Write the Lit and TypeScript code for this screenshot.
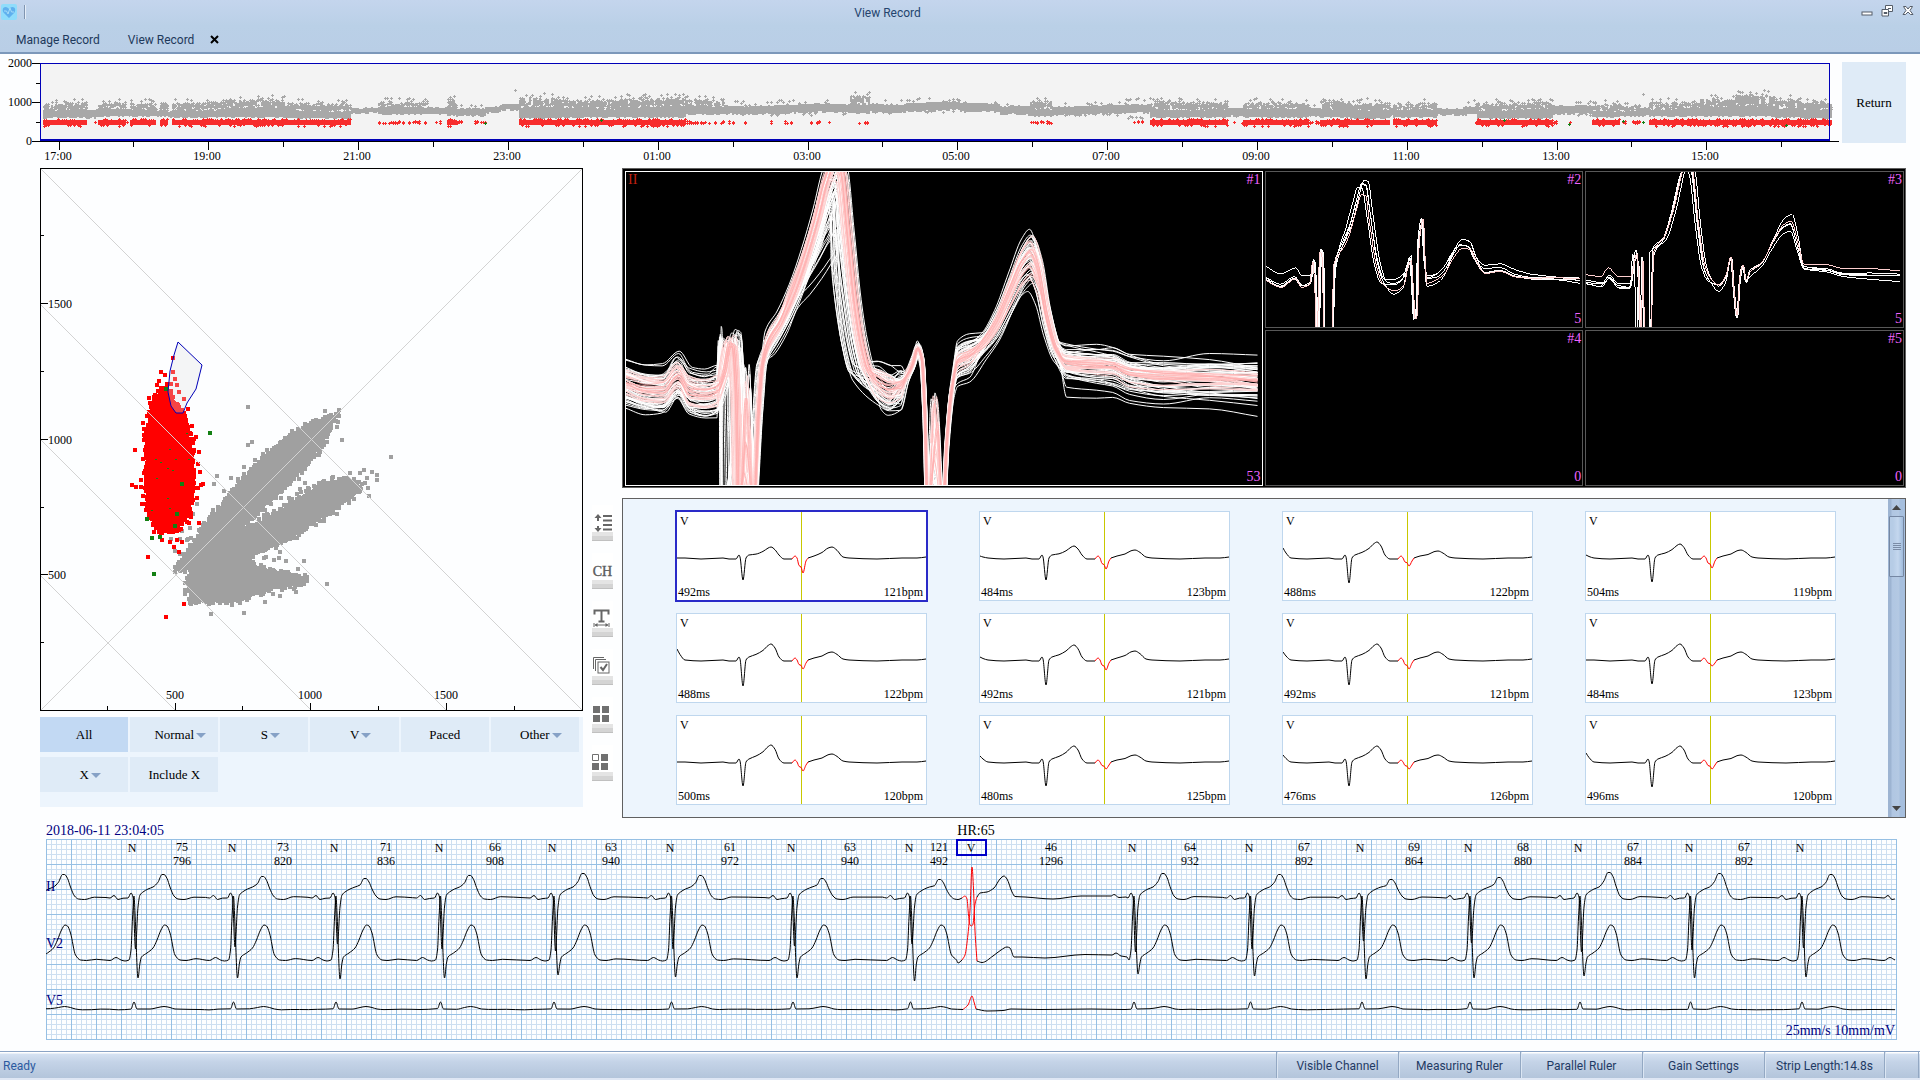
import { LitElement, html, svg, css, nothing } from "lit";
import { customElement, property } from "lit/decorators.js";
import { classMap } from "lit/directives/class-map.js";

type Pt = [number, number];

/* ---------- shared helpers ---------- */

/** Small seeded generator, so every render draws the same data. */
function rng(seed: number): () => number {
  let s = seed >>> 0;
  return () => {
    s = (s + 0x6d2b79f5) >>> 0;
    let t = s;
    t = Math.imul(t ^ (t >>> 15), t | 1);
    t ^= t + Math.imul(t ^ (t >>> 7), t | 61);
    return ((t ^ (t >>> 14)) >>> 0) / 4294967296;
  };
}

const f = (n: number) => n.toFixed(1);

/** Monotone cubic path through points whose x only increases. */
function curve(p: Pt[]): string {
  const n = p.length;
  const d: number[] = [];
  for (let i = 0; i < n - 1; i++) d.push((p[i + 1][1] - p[i][1]) / (p[i + 1][0] - p[i][0] || 0.01));
  const m: number[] = [d[0]];
  for (let i = 1; i < n - 1; i++) {
    const a = d[i - 1];
    const b = d[i];
    m.push(a * b <= 0 ? 0 : (2 * a * b) / (a + b));
  }
  m.push(d[n - 2]);
  let out = `M${f(p[0][0])} ${f(p[0][1])}`;
  for (let i = 0; i < n - 1; i++) {
    const h = (p[i + 1][0] - p[i][0]) / 3;
    out += `C${f(p[i][0] + h)} ${f(p[i][1] + m[i] * h)} ${f(p[i + 1][0] - h)} ${f(p[i + 1][1] - m[i + 1] * h)} ${f(p[i + 1][0])} ${f(p[i + 1][1])}`;
  }
  return out;
}

function inside(x: number, y: number, poly: Pt[]): boolean {
  let hit = false;
  for (let i = 0, j = poly.length - 1; i < poly.length; j = i++) {
    const [xi, yi] = poly[i];
    const [xj, yj] = poly[j];
    if (yi > y !== yj > y && x < ((xj - xi) * (y - yi)) / (yj - yi) + xi) hit = !hit;
  }
  return hit;
}

const polyPath = (p: Pt[]) => "M" + p.map(([x, y]) => `${x} ${y}`).join("L") + "Z";

/* ---------- trend overview ---------- */

/** from, to, upper edge, lower edge, upper scatter density, ectopic density */
const TREND: [number, number, number, number, number, number][] = [
  [43, 47, 102, 120, 1, 1.4], [47, 86, 101, 118, 0.9, 1], [86, 98, 109, 119, 0.1, 0.15], [98, 126, 101, 117, 0.8, 0.9],
  [126, 130, 108, 117, 0.4, 0.3], [130, 155, 102, 117, 0.9, 1], [155, 160, 109, 116, 0.2, 0], [160, 168, 102, 117, 0.8, 0.9],
  [168, 172, 109, 117, 0.3, 0], [172, 225, 101, 118, 0.8, 1], [225, 285, 98, 118, 1, 1.2], [285, 351, 102, 119, 0.8, 1.1],
  [351, 378, 107, 113, 0, 0], [378, 427, 100, 115, 0.6, 0.5], [427, 447, 106, 114, 0.1, 0.05], [447, 456, 98, 116, 1, 1],
  [456, 485, 106, 115, 0.15, 0.15], [485, 500, 105, 112, 0, 0], [500, 519, 103, 110, 0, 0.02], [519, 560, 96, 119, 0.8, 1],
  [560, 620, 98, 118, 0.8, 1.1], [620, 686, 96, 118, 0.9, 1.1], [686, 724, 98, 115, 0.8, 0.4], [724, 760, 102, 116, 0.2, 0.1],
  [760, 830, 101, 115, 0.3, 0.15], [830, 850, 102, 115, 0.2, 0.02], [850, 870, 94, 114, 0.7, 0.25], [870, 906, 101, 113, 0.2, 0],
  [906, 960, 99, 112, 0.4, 0], [960, 1000, 102, 113, 0.1, 0], [1000, 1008, 104, 117, 0.4, 0.25], [1008, 1030, 103, 115, 0.1, 0],
  [1030, 1052, 99, 117, 0.5, 0.4], [1052, 1125, 103, 116, 0.3, 0], [1125, 1150, 99, 118, 0.4, 0.25], [1150, 1227, 100, 118, 0.8, 1],
  [1227, 1243, 107, 116, 0.2, 0.2], [1243, 1309, 101, 118, 0.8, 1], [1309, 1320, 106, 116, 0.3, 0.15], [1320, 1350, 99, 118, 0.8, 1],
  [1350, 1389, 101, 119, 0.8, 1], [1389, 1393, 107, 116, 0.2, 0], [1393, 1436, 102, 118, 0.7, 1], [1436, 1463, 107, 115, 0, 0.04],
  [1463, 1477, 101, 117, 0.3, 0.25], [1477, 1553, 101, 119, 0.8, 1], [1553, 1575, 105, 115, 0.1, 0.25], [1575, 1592, 102, 116, 0.3, 0.1],
  [1592, 1620, 102, 118, 0.6, 0.8], [1620, 1640, 104, 117, 0.5, 0.35], [1640, 1649, 105, 115, 0.1, 0.05], [1649, 1700, 101, 117, 0.8, 1.2],
  [1700, 1735, 97, 117, 1, 1.3], [1735, 1775, 93, 117, 1, 1.2], [1775, 1800, 97, 118, 0.9, 1.1], [1800, 1831, 100, 119, 0.8, 1.3],
];

const plus = (x: number, y: number) => `M${x} ${y}h1v-1h1v1h1v1h-1v1h-1v-1h-1z`;
const column = (x: number, y0: number, y1: number) => `M${x} ${Math.round(y0)}h2V${Math.round(y1)}h-2z`;

@customElement("trend-plot")
export class TrendPlot extends LitElement {
  static styles = css`
    :host { display: block; }
    svg { display: block; width: 100%; height: auto; }
    text { font: 12px "Liberation Serif", "Times New Roman", serif; fill: #000; }
    .axis { fill: none; stroke: #000; shape-rendering: crispEdges; }
    .area { fill: #f3f3f3; }
    .frame { fill: none; stroke: #0000b8; shape-rendering: crispEdges; }
    .sinus { fill: #a8a8a8; shape-rendering: crispEdges; }
    .ectopic { fill: #f72c2c; shape-rendering: crispEdges; }
    .other { fill: #138013; shape-rendering: crispEdges; }
  `;

  render() {
    const r = rng(7);
    let grey = "";
    let red = "";
    for (const [x0, x1, top, bottom, scatter, ectopic] of TREND) {
      const thin = scatter <= 0.45;
      for (let x = x0; x < x1; x += 2) {
        const mid = (top + bottom) / 2 + Math.sin(x / 23);
        if (thin) {
          const half = Math.min(4, (bottom - top) / 2.5);
          grey += column(x, mid - half + r(), mid + half + r() * 2);
          if (r() < scatter) grey += plus(x, Math.round(top + (r() - 0.3) * 5));
          if (r() < scatter) grey += plus(x, Math.round(bottom - r() * 2));
        } else {
          grey += column(x, mid - 1 + r() * 2, bottom - 1 + r());
          if (r() < 0.85) grey += column(x, top + 2 + r() * 3, mid - r() * 2);
          for (let k = 0; k < 6; k++) {
            if (r() < scatter) grey += plus(x, Math.round(top + 1 + r() * (bottom - top - 4)));
          }
          if (r() < 0.3 * scatter) grey += plus(x, Math.round(top - r() * 3));
        }
        if (ectopic >= 0.8) {
          red += column(x, 120.5 - r(), 124.5 + r() * ectopic);
          if (r() < 0.5 * ectopic) red += plus(x, Math.round(119 + r()));
          if (r() < 0.35 * ectopic) red += plus(x, Math.round(125 + r() * 0.7));
        } else if (r() < ectopic * 1.4) {
          red += plus(x, Math.round(121 + r() * 2)) + plus(x, Math.round(122 + r()));
        }
      }
    }
    grey += plus(514, 90) + plus(1642, 94);
    const hours = Array.from({ length: 24 }, (_, i) => i);
    return html`<svg viewBox="0 54 1842 110" role="img" aria-label="RR interval trend">
      <rect class="area" x="40" y="63" width="1789" height="78"></rect>
      <path class="sinus" d=${grey}></path>
      <path class="ectopic" d=${red}></path>
      <path class="other" d=${plus(484, 123) + plus(600, 120) + plus(1503, 120) + plus(1622, 121) + plus(1642, 122) + plus(1568, 124) + plus(1785, 125)}></path>
      <path class="frame" d="M40.5 141V63.5H1829.5V141"></path>
      <path class="frame" stroke-width="2" d="M40 140H1830"></path>
      <path class="axis" d="M32 141.5H1839M32 63.5H40M36 83.5H40M32 102.5H40M36 122.5H40"></path>
      ${[[2000, 63], [1000, 102], [0, 141]].map(([v, y]) => svg`<text x="32" y=${y + 4} text-anchor="end">${v}</text>`)}
      ${hours.map((h) => {
        const x = Math.round(58.5 + h * 74.9);
        const hour = String((17 + h) % 24).padStart(2, "0");
        return svg`<path class="axis" d="M${x + 0.5} 142v${h % 2 ? 5 : 8}"></path>
          ${h % 2 ? nothing : svg`<text x=${x - 1} y="160" text-anchor="middle">${hour}:00</text>`}`;
      })}
    </svg>`;
  }
}

/* ---------- Lorenz plot ---------- */

const RED_CLOUD: Pt[] = [[109, 246], [112, 236], [117, 226], [124, 220], [130, 224], [136, 234], [143, 245], [146, 252], [148, 263], [152, 278], [153, 296], [153, 313], [152, 333], [149, 345], [143, 355], [135, 363], [122, 365], [113, 356], [109, 348], [106, 335], [106, 296], [107, 271]];
const GREY_CLOUD: Pt[] = [[135, 403], [144, 388], [158, 367], [169, 351], [185, 333], [201, 313], [222, 290], [247, 270], [272, 255], [292, 247], [298, 248], [292, 258], [283, 276], [265, 299], [247, 317], [236, 330], [222, 341], [210, 352], [200, 363], [219, 354], [240, 342], [261, 328], [279, 317], [301, 311], [317, 312], [321, 321], [311, 331], [297, 340], [276, 354], [254, 369], [233, 378], [211, 389], [208, 394], [218, 398], [233, 402], [254, 405], [263, 410], [263, 415], [254, 418], [233, 420], [211, 429], [190, 435], [169, 434], [151, 434], [147, 420], [151, 400], [144, 404]];
const GREY_DOTS: Pt[] = [[208, 239], [212, 274], [208, 277], [177, 308], [174, 316], [184, 323], [204, 299], [215, 292], [351, 289], [324, 302], [332, 304], [337, 307], [337, 312], [327, 310], [325, 315], [320, 305], [329, 328], [328, 320], [297, 259], [302, 272], [279, 287], [265, 315], [268, 320], [257, 326], [287, 416], [264, 393], [240, 384], [239, 390], [246, 393], [225, 434], [204, 445], [171, 446], [256, 424], [267, 413], [240, 428], [285, 243], [265, 256], [157, 336], [159, 362], [142, 363], [135, 383], [140, 371], [140, 325], [144, 326], [150, 360], [147, 372], [131, 371], [136, 351], [153, 346], [191, 310], [198, 311], [249, 330], [254, 334], [226, 389], [234, 392], [299, 248], [299, 242], [267, 409], [258, 401], [310, 305]];
const RED_DOTS: Pt[] = [[133, 190], [121, 204], [133, 204], [125, 207], [119, 213], [117, 217], [109, 230], [95, 282], [92, 317], [96, 319], [108, 389], [144, 436], [126, 449], [159, 355], [148, 241], [139, 384], [134, 379], [130, 374], [163, 316], [158, 296], [159, 284], [154, 271], [114, 364], [135, 211], [137, 217], [139, 224], [137, 372], [122, 372], [110, 235], [104, 261], [104, 267], [144, 231], [156, 269], [160, 304], [161, 317], [158, 320], [152, 258], [157, 330], [142, 374], [131, 216], [131, 224], [127, 216]];
const GREEN_DOTS: Pt[] = [[170, 265], [112, 370], [120, 369], [114, 406], [107, 351], [142, 316], [137, 346], [135, 358], [126, 221]];
const LASSO: Pt[] = [[138, 174], [162, 197], [156, 221], [147, 235], [143, 245], [136, 245], [131, 238], [128, 224], [130, 203], [134, 187]];

const squares = (pts: Pt[]) => pts.map(([x, y]) => `M${Math.round(x) - 2} ${Math.round(y) - 2}h4v4h-4z`).join("");

/** Squares dropped along the rim of a cloud, so that its edge is ragged. */
function rim(poly: Pt[], seed: number, spread: number): Pt[] {
  const r = rng(seed);
  const out: Pt[] = [];
  poly.forEach(([x, y], i) => {
    const [u, v] = poly[(i + 1) % poly.length];
    const steps = Math.max(1, Math.round(Math.hypot(u - x, v - y) / 2));
    for (let k = 0; k < steps; k++) {
      const t = k / steps;
      const s = r() * r() * spread;
      const a = r() * Math.PI * 2;
      out.push([x + (u - x) * t + Math.cos(a) * s, y + (v - y) * t + Math.sin(a) * s]);
    }
  });
  return out;
}

@customElement("lorenz-plot")
export class LorenzPlot extends LitElement {
  static styles = css`
    :host { display: block; }
    svg { display: block; width: 100%; height: auto; }
    text { font: 12px "Liberation Serif", "Times New Roman", serif; fill: #000; }
    .frame { fill: none; stroke: #000; shape-rendering: crispEdges; }
    .guide { stroke: #d3d3d3; fill: none; }
    .grey { fill: #a0a0a0; shape-rendering: crispEdges; }
    .red { fill: #f00; shape-rendering: crispEdges; }
    .green { fill: #138013; shape-rendering: crispEdges; }
    .lasso { fill: rgba(225, 225, 225, 0.3); stroke: #0000b8; }
  `;

  render() {
    const r = rng(21);
    const specks: Pt[] = [];
    while (specks.length < 12) {
      const x = 106 + r() * 48;
      const y = 260 + r() * 90;
      if (inside(x, y, RED_CLOUD)) specks.push([x, y]);
    }
    return html`<svg viewBox="0 0 543 543" role="img" aria-label="Lorenz plot">
      <path class="grey" d=${polyPath(GREY_CLOUD)}></path>
      <path class="grey" d=${squares(rim(GREY_CLOUD, 31, 8)) + squares(GREY_DOTS)}></path>
      <path class="red" d=${polyPath(RED_CLOUD)}></path>
      <path class="red" d=${squares(rim(RED_CLOUD, 5, 8)) + squares(RED_DOTS)}></path>
      <path class="green" d=${squares(GREEN_DOTS)}></path>
      <path class="green" d=${specks.map(([x, y]) => `M${Math.round(x)} ${Math.round(y)}h2v1h-2z`).join("")}></path>
      <path class="guide" d="M0 543L543 0M0 0L543 543M0 136L407 543M0 271L272 543M0 407L136 543"></path>
      <path class="lasso" d=${polyPath(LASSO)}></path>
      <rect class="frame" x="0.5" y="0.5" width="542" height="542"></rect>
      ${[500, 1000, 1500].map((v) => {
        const p = Math.round(v * 0.2712);
        return svg`<path class="frame" d="M0 ${542.5 - p}h8M${p - 0.5} 542v-7"></path>
          <text x="8" y=${547 - p}>${v}</text>
          <text x=${p - 1} y="531" text-anchor="middle">${v}</text>`;
      })}
      ${[250, 750, 1250, 1750].map((v) => {
        const p = Math.round(v * 0.2712);
        return svg`<path class="frame" d="M0 ${542.5 - p}h4M${p - 0.5} 542v-4"></path>`;
      })}
    </svg>`;
  }
}

/* ---------- overlaid templates ---------- */

/**
 * x, y, group. b = baseline, q = first QRS, r = second QRS, x = clipped trough,
 * w = rebound inside the trough, y = upstroke after the trough, s = ST segment,
 * t / f = rise and fall of the first T wave, u = second T wave
 */
type Key = [number, number, string];

const TEMPLATE_1: Key[] = [
  [0, 212, "b"], [20, 218, "b"], [37, 219, "b"], [52, 204, "b"], [64, 220, "b"], [79, 223, "b"], [92, 219, "b"], [100, 200, "q"], [106, 172, "q"], [109, 174, "q"], [112, 215, "q"], [115, 340, "x"],
  [121, 340, "w"], [128, 340, "x"], [133, 239, "y"], [137, 192, "y"], [143, 170, "s"], [155, 150, "s"], [168, 121, "t"], [180, 86, "t"], [192, 44, "t"], [201, 7, "t"], [208, -10, "t"], [216, -4, "f"], [223, 60, "f"], [230, 130, "f"],
  [237, 174, "f"], [244, 199, "f"], [253, 212, "b"], [264, 218, "b"], [275, 214, "b"], [281, 204, "r"], [287, 192, "r"], [292, 177, "r"], [296, 187, "r"], [299, 242, "r"], [302, 340, "x"], [309, 340, "w"], [317, 340, "x"], [321, 270, "r"],
  [326, 218, "r"], [332, 190, "b"], [344, 184, "b"], [357, 172, "u"], [370, 153, "u"], [384, 122, "u"], [397, 94, "u"], [405, 86, "u"], [413, 104, "u"], [421, 145, "u"], [431, 179, "u"], [441, 192, "b"], [471, 194, "b"],
  [487, 195, "b"], [504, 202, "b"], [538, 206, "b"], [584, 207, "b"], [632, 210, "b"],
];
const TEMPLATE_2: Key[] = [
  [0, 106, "b"], [15, 114, "b"], [29, 107, "b"], [36, 115, "b"], [44, 113, "b"], [48, 89, "q"], [50, 115, "q"], [52, 175, "x"], [55, 79, "q"], [57, 82, "q"], [59, 175, "x"], [66, 175, "x"], [69, 92, "q"], [78, 72, "s"], [86, 52, "t"],
  [93, 24, "t"], [98, 8, "t"], [102, 9, "t"], [107, 42, "f"], [114, 90, "f"], [121, 111, "f"], [128, 117, "b"], [137, 112, "b"], [142, 95, "r"], [145, 87, "r"], [147, 115, "r"], [149, 147, "r"], [151, 143, "r"],
  [153, 72, "r"], [157, 49, "r"], [159, 89, "r"], [161, 107, "b"], [170, 105, "b"], [179, 97, "b"], [187, 82, "u"], [196, 70, "u"], [204, 72, "u"], [210, 86, "u"], [219, 97, "b"], [234, 95, "b"], [250, 102, "b"], [267, 105, "b"], [292, 106, "b"], [314, 108, "b"],
];
const TEMPLATE_3: Key[] = [
  [0, 105, "b"], [15, 107, "b"], [23, 99, "b"], [32, 108, "b"], [44, 108, "b"], [50, 82, "q"], [52, 108, "q"], [54, 175, "x"], [56, 89, "q"], [58, 175, "x"], [64, 175, "x"], [67, 80, "q"], [78, 65, "s"], [88, 35, "t"], [97, -5, "t"], [101, -14, "t"],
  [106, -8, "t"], [113, 52, "f"], [119, 93, "f"], [126, 108, "f"], [133, 112, "b"], [140, 103, "b"], [145, 85, "r"], [148, 120, "r"], [151, 144, "r"], [154, 105, "r"], [157, 93, "r"], [160, 109, "r"], [164, 98, "b"],
  [176, 89, "b"], [187, 69, "u"], [198, 52, "u"], [205, 49, "u"], [212, 72, "u"], [218, 92, "b"], [242, 94, "b"], [257, 98, "b"], [285, 99, "b"], [314, 100, "b"],
];

interface Spread { base: number; shift: number; qrs: number; peak: number; early: number; }

function family(keys: Key[], count: number, seed: number, s: Spread): string[] {
  const r = rng(seed);
  const g = () => r() + r() - 1;
  const wide = keys[keys.length - 1][0] > 400 ? 1 : 0.5;
  return Array.from({ length: count }, () => {
    const off = (r() * 2 - 1) * s.base;
    const tail = off * 0.6 + g() * s.base * 0.7;
    const wander = r() * 6;
    const sh = g() * s.shift;
    const qs = (0.2 - Math.pow(r(), 2.2)) * s.qrs;
    const qy = g() * s.base;
    const low = r();
    const drop = low * low * s.peak;
    const lag = drop / s.peak;
    const u = g();
    const deep = r();
    const deep2 = r();
    let last = -9;
    const pts = keys.map(([x, y, kind], i): Pt => {
      const first = x < 250 * wide;
      let nx = x;
      let ny = y;
      if (kind === "b") {
        const late = i > keys.length / 2;
        ny += (late ? tail * (0.8 + (x / keys[keys.length - 1][0]) * 0.3) : off) + Math.sin(x / 40 + wander) * s.base * 0.2 + g() * 2.5 * wide;
        if (x > 0 && !late) nx += g() * 3 * wide;
      } else if (kind === "q") {
        nx += qs;
        ny += qy * 0.8;
      } else if (kind === "r") {
        nx += sh * 0.3;
        ny += off * 0.2 + g() * s.base * 0.2;
      } else if (kind === "x") {
        nx += first ? qs * (x < 118 * wide ? 1 : 0.3) : sh * 0.3;
      } else if (kind === "w") {
        nx += first ? qs * 0.4 + g() * 5 : g() * 5;
        ny -= first ? deep * 150 : deep2 * 120;
      } else if (kind === "y") {
        nx += qs * 0.2 + sh * 0.4;
      } else if (kind === "s") {
        ny += off * 0.5;
        nx += sh * 0.8;
      } else if (kind === "t") {
        nx += sh - lag * 4;
        ny += drop * Math.max(0, 1 - Math.max(0, y) / 130) + off * 0.4;
      } else if (kind === "f") {
        nx += sh * 0.8 - lag * s.early;
        ny += drop * 0.7 * Math.max(0, 1 - Math.max(0, y) / 130) + off * 0.4;
      } else {
        ny += u * 28 * wide * Math.max(0, 1 - Math.abs(y - 86 * wide) / (110 * wide)) + tail * 0.5;
        nx += sh * 0.5;
      }
      nx = Math.max(nx, last + 0.6);
      last = nx;
      return [nx, ny];
    });
    return curve(pts);
  });
}

@customElement("template-cell")
export class TemplateCell extends LitElement {
  @property({ type: Number }) index = 1;
  @property({ type: Number }) count = 0;
  @property() lead = "";
  @property({ type: Boolean, reflect: true }) active = false;

  static styles = css`
    :host {
      display: grid;
      box-sizing: border-box;
      border: 1px solid #585858;
      background: #000;
      font: 14px/16px "Liberation Serif", "Times New Roman", serif;
      color: #f064ff;
      overflow: hidden;
      min-width: 0;
      min-height: 0;
    }
    :host([active]) { border-color: #fff; }
    .wave, .labels { grid-area: 1 / 1; min-width: 0; }
    .wave { display: block; fill: none; width: 100%; height: 0; min-height: 100%; shape-rendering: crispEdges; }
    .labels { display: grid; grid-template-columns: 1fr auto; align-content: space-between; padding: 0 1px 0 2px; }
    .lead { color: #c02010; }
    .count { grid-column: 2; text-align: right; }
    .white { stroke: #fff; }
    .pale { stroke: #ffd0d0; }
    .pink { stroke: #ffaeae; stroke-opacity: 0.8; }
  `;

  private traces() {
    if (this.index === 1) {
      const wide = family(TEMPLATE_1, 50, 3, { base: 24, shift: 9, qrs: 30, peak: 90, early: 26 });
      const mid = family(TEMPLATE_1, 24, 9, { base: 14, shift: 6, qrs: 10, peak: 22, early: 6 });
      const tight = family(TEMPLATE_1, 7, 14, { base: 7, shift: 3, qrs: 5, peak: 9, early: 3 });
      return svg`${wide.map((d) => svg`<path class="white" d=${d}></path>`)}
        ${mid.map((d, i) => svg`<path class=${i % 3 ? "pale" : "white"} d=${d}></path>`)}
        ${tight.map((d) => svg`<path class="pink" d=${d}></path>`)}`;
    }
    if (this.index > 3) return nothing;
    const keys = this.index === 2 ? TEMPLATE_2 : TEMPLATE_3;
    const base = this.index === 2 ? 14 : 7;
    const lines = family(keys, 5, 40 + this.index, { base, shift: 5, qrs: 5, peak: 16, early: 5 });
    return lines.map((d, i) => svg`<path class=${i === 4 ? "pale" : "white"} d=${d}></path>`);
  }

  render() {
    const box = this.index === 1 ? "0 0 636 313" : "0 0 317 155";
    return html`
      <svg class="wave" viewBox=${box} preserveAspectRatio="none" aria-hidden="true">${this.traces()}</svg>
      <div class="labels">
        <span class="lead">${this.lead}</span><span>#${this.index}</span>
        <span class="count">${this.count}</span>
      </div>`;
  }
}

/* ---------- beat thumbnails ---------- */

interface Beat { ms: number; bpm: number; start: number; t: number; s: number; u: number; deep: number; }

const BEATS: Beat[] = [
  { ms: 492, bpm: 121, start: 0, t: 11, s: 22, u: 11, deep: 15 },
  { ms: 484, bpm: 123, start: 2, t: 12, s: 22, u: 8, deep: 11 },
  { ms: 488, bpm: 122, start: 10, t: 16, s: 25, u: 7, deep: 8 },
  { ms: 504, bpm: 119, start: 3, t: 14, s: 24, u: 8, deep: 10 },
  { ms: 488, bpm: 122, start: 11, t: 16, s: 26, u: 8, deep: 9 },
  { ms: 492, bpm: 121, start: 3, t: 15, s: 25, u: 9, deep: 10 },
  { ms: 492, bpm: 121, start: 8, t: 16, s: 25, u: 8, deep: 9 },
  { ms: 484, bpm: 123, start: 0, t: 16, s: 24, u: 8, deep: 6 },
  { ms: 500, bpm: 120, start: 0, t: 17, s: 24, u: 8, deep: 9 },
  { ms: 480, bpm: 125, start: 6, t: 16, s: 24, u: 7, deep: 7 },
  { ms: 476, bpm: 126, start: 7, t: 16, s: 24, u: 7, deep: 7 },
  { ms: 496, bpm: 120, start: 9, t: 16, s: 25, u: 7, deep: 7 },
];

@customElement("beat-card")
export class BeatCard extends LitElement {
  @property({ attribute: false }) beat!: Beat;
  @property({ type: Boolean, reflect: true }) selected = false;

  static styles = css`
    :host { display: block; min-width: 0; }
    .card {
      display: grid;
      width: 100%;
      height: 100%;
      padding: 0;
      border: 1px solid #bfd7ee;
      background: #fff;
      font: 12px/14px "Liberation Serif", "Times New Roman", serif;
      color: #000;
      text-align: left;
    }
    :host([selected]) .card { outline: 2px solid #2a2ac8; outline-offset: -1px; border-color: #0000b0; }
    svg, .labels, .mark { grid-area: 1 / 1; min-width: 0; }
    svg { display: block; fill: none; width: 100%; height: 100%; }
    .labels { display: grid; grid-template-columns: 1fr auto; align-content: space-between; padding: 2px 3px 1px 1px; }
    .type { grid-column: 1 / 3; padding-left: 2px; }
    .mark { justify-self: center; width: 1px; background: #c8c800; }
    .trace { stroke: #000; }
    .ectopic { stroke: #f00; }
  `;

  render() {
    const b = this.beat;
    const y = 46;
    const before = curve([[0, y - b.start], [3, y - b.start * 0.5], [8, y], [24, y + 1], [46, y], [52, y + 1], [59, y + 1], [62, y - 3], [63, y - 1], [66, y + b.s], [69, y], [72, y - 3], [79, y - b.t * 0.35], [86, y - b.t * 0.6], [91, y - b.t * 0.9], [94, y - b.t], [98, y - b.t * 0.75], [102, y - 3], [107, y + 1], [115, y + 1]]);
    const red = curve([[115, y + 1], [118, y - 2], [120, y], [122, y + b.deep * 0.5], [124, y + b.deep * 0.6], [126, y + b.deep], [129, y + 3], [131, y]]);
    const after = curve([[131, y], [137, y - 2], [145, y - b.u * 0.5], [151, y - b.u * 0.9], [155, y - b.u], [160, y - b.u * 0.7], [166, y - 1], [172, y], [200, y + 1], [225, y], [240, y], [249, y - 1]]);
    return html`<button class="card" type="button">
      <span class="mark"></span>
      <svg viewBox="0 0 249 88" preserveAspectRatio="none" aria-hidden="true">
        <path class="trace" d=${before}></path>
        <path class="ectopic" d=${red}></path>
        <path class="trace" d=${after}></path>
      </svg>
      <span class="labels">
        <span class="type">V</span>
        <span>${b.ms}ms</span><span>${b.bpm}bpm</span>
      </span>
    </button>`;
  }
}

/* ---------- ECG strip ---------- */

/** RR interval to the next beat (ms), rate, T amplitude, depth of the notch in II and of the S wave in V2 */
const STRIP: { rr: number; hr: number; t: number; notch: number; q: number }[] = [
  { rr: 796, hr: 75, t: 24, notch: 104, q: 98 }, { rr: 820, hr: 73, t: 22, notch: 102, q: 98 }, { rr: 836, hr: 71, t: 20, notch: 99, q: 99 },
  { rr: 908, hr: 66, t: 23, notch: 104, q: 98 }, { rr: 940, hr: 63, t: 25, notch: 106, q: 95 }, { rr: 972, hr: 61, t: 23, notch: 104, q: 97 },
  { rr: 940, hr: 63, t: 20, notch: 101, q: 98 }, { rr: 492, hr: 121, t: 19, notch: 99, q: 101 }, { rr: 1296, hr: 46, t: 0, notch: 0, q: 0 },
  { rr: 932, hr: 64, t: 25, notch: 107, q: 94 }, { rr: 892, hr: 67, t: 24, notch: 104, q: 96 }, { rr: 864, hr: 69, t: 19, notch: 96, q: 99 },
  { rr: 880, hr: 68, t: 21, notch: 98, q: 98 }, { rr: 884, hr: 67, t: 26, notch: 107, q: 96 }, { rr: 892, hr: 67, t: 25, notch: 105, q: 98 },
  { rr: 0, hr: 0, t: 24, notch: 103, q: 97 },
];
const ECTOPIC = 8;

@customElement("ecg-strip")
export class EcgStrip extends LitElement {
  static styles = css`
    :host { display: block; }
    svg { display: block; width: 100%; height: auto; }
    text { font: 12px "Liberation Serif", "Times New Roman", serif; fill: #000; text-anchor: middle; }
    .label { font-size: 14px; fill: #000080; text-anchor: start; }
    .end { text-anchor: end; }
    .rate { font-size: 14px; }
    .minor { stroke: #cddff1; shape-rendering: crispEdges; }
    .major { stroke: #96c0e4; shape-rendering: crispEdges; }
    .trace { fill: none; stroke: #000; }
    .ectopic { fill: none; stroke: #f00; }
    .pick { fill: none; stroke: #0000c8; stroke-width: 2; shape-rendering: crispEdges; }
  `;

  render() {
    const xs: number[] = [86];
    STRIP.slice(0, -1).forEach((b, i) => xs.push(xs[i] + b.rr / 8));
    const V = xs[ECTOPIC] + 1;
    const ii: Pt[][] = [[], []];
    const v2: Pt[][] = [[], []];
    const v5: Pt[][] = [[], []];
    const r = rng(77);
    const j = () => (r() - 0.5) * 0.8;
    const all = [{ x: -13.5, t: 24, notch: 100, q: 98, next: 86 }, ...STRIP.map((b, i) => ({ ...b, x: xs[i], next: xs[i + 1] ?? 1860 }))];
    all.forEach((b, i) => {
      if (i === ECTOPIC + 1) return;
      const k = i > ECTOPIC ? 1 : 0;
      const x = b.x;
      ii[k].push([x - 4, 59], [x - 1, 54], [x + 1, 58], [x + 3.5, b.notch + 6], [x + 6, 68], [x + 8, 56], [x + 11, 53], [x + 16, 50], [x + 21, 48], [x + 26, 60 - b.t * 0.7], [x + 30, 59.5 - b.t], [x + 32, 59.5 - b.t], [x + 35, 61 - b.t * 0.9], [x + 38, 60 - b.t * 0.5], [x + 42, 57], [x + 46, 60]);
      v2[k].push([x - 3, 121], [x - 1, 111], [x + 0.5, 79], [x + 2, 57], [x + 3, 74], [x + 6, b.q + 41], [x + 8, 124], [x + 9.5, 118], [x + 15, 114], [x + 21, 109], [x + 25, 101], [x + 29, 91], [x + 32.5, 86], [x + 35, 87], [x + 38, 94], [x + 43, 116], [x + 48, 121]);
      v5[k].push([x - 1, 170 + j()], [x + 2, 163], [x + 5, 170], [x + 18, 170 + j()], [x + 26, 168.5], [x + 32, 167.5], [x + 38, 168.5], [x + 43, 170]);
      if (i !== ECTOPIC) {
        const e = b.next;
        const q = (e - x - 60) / 3;
        ii[k].push([x + 52, 60.5], [x + 62, 58 + j()], [Math.max(x + 66, e - 26), 58.5 + j()], [Math.max(x + 68, e - 22), 59], [e - 18, 56.5], [e - 14, 60.5], [e - 9, 59.5 + j()]);
        v2[k].push([x + 54, 121.5], [x + 64, 120 + j()], [Math.max(x + 68, e - 22), 121.5], [e - 16, 118.5], [e - 11, 121], [e - 7, 122]);
        for (let n = 0; n < q / 3; n++) v5[k].push([x + 50 + n * 9, 170.5 + j()]);
      }
    });
    ii[0].push([V - 22, 60], [V - 13, 60.5], [V - 9, 59]);
    v2[0].push([V - 13, 124], [V - 9, 121]);
    v5[0].push([V - 8, 170.5]);
    ii[1].unshift([V + 6, 58], [V + 9, 54], [V + 16, 53], [V + 23, 49], [V + 29, 40], [V + 33, 37], [V + 36, 40], [V + 41, 53], [V + 44, 57.5], [V + 54, 58], [V + 82, 60], [V + 110, 57], [V + 140, 57], [V + 143, 55.5], [V + 148, 58.5], [V + 155, 58]);
    v2[1].unshift([V + 6, 122], [V + 11, 123.5], [V + 22, 117], [V + 30, 111], [V + 36, 108], [V + 39, 109], [V + 43, 118], [V + 51, 118], [V + 74, 119], [V + 114, 115.5], [V + 141, 116], [V + 145, 114], [V + 150, 117], [V + 156, 118]);
    v5[1].unshift([V + 5, 170], [V + 16, 172], [V + 32, 171.5], [V + 40, 170], [V + 70, 170.5], [V + 120, 170], [V + 154, 170.5]);
    const minorV = Array.from({ length: 371 }, (_, i) => `M${i * 5 + 0.5} 0V201`).join("");
    const minorH = Array.from({ length: 41 }, (_, i) => `M0 ${i * 5 + 0.5}H1851`).join("");
    const majorV = Array.from({ length: 75 }, (_, i) => `M${i * 25 + 0.5} 0V201`).join("");
    const majorH = Array.from({ length: 9 }, (_, i) => `M0 ${i * 25 + 0.5}H1851`).join("");
    return html`<svg viewBox="0 -21 1851 222" role="img" aria-label="ECG strip, leads II, V2 and V5">
      <defs><clipPath id="paper"><rect x="0" y="0" width="1849" height="201"></rect></clipPath></defs>
      <path class="minor" d=${minorV + minorH}></path>
      <path class="major" d=${majorV + majorH}></path>
      <g clip-path="url(#paper)">
        ${[...ii, ...v2, ...v5].map((p) => svg`<path class="trace" d=${curve(p.filter((a, i) => !i || a[0] > p[i - 1][0]))}></path>`)}
        <path class="ectopic" d=${curve([[V - 9, 59], [V - 6, 57], [V - 4, 60], [V - 2.5, 76], [V - 1, 86], [V + 0.5, 87], [V + 2, 85], [V + 4, 65], [V + 6, 58]])}></path>
        <path class="ectopic" d=${curve([[V - 9, 121], [V - 6, 116], [V - 3, 95], [V - 1, 71], [V + 1, 28], [V + 2.5, 50], [V + 4, 92], [V + 6, 122]])}></path>
        <path class="ectopic" d=${curve([[V - 8, 170.5], [V - 3, 166], [V + 1, 157], [V + 3, 163], [V + 5, 170]])}></path>
      </g>
      <text class="label" x="0" y="-4">2018-06-11 23:04:05</text>
      <text class="rate" x="930" y="-4">HR:65</text>
      <text class="label" x="0" y="52">II</text>
      <text class="label" x="0" y="109">V2</text>
      <text class="label" x="0" y="166">V5</text>
      <text class="label end" x="1849" y="196">25mm/s 10mm/mV</text>
      ${STRIP.map((b, i) => {
        const mid = (xs[i] + (xs[i + 1] ?? 0)) / 2;
        return svg`<text x=${Math.round(i === ECTOPIC ? V : xs[i])} y="13">${i === ECTOPIC ? "V" : "N"}</text>
          ${b.rr ? svg`<text x=${Math.round(mid)} y="12">${b.hr}</text><text x=${Math.round(mid)} y="26">${b.rr}</text>` : nothing}`;
      })}
      <rect class="pick" x="911" y="1" width="29" height="15"></rect>
    </svg>`;
  }
}

/* ---------- page ---------- */

const FILTERS = [
  { name: "All", menu: false }, { name: "Normal", menu: true }, { name: "S", menu: true }, { name: "V", menu: true },
  { name: "Paced", menu: false }, { name: "Other", menu: true }, { name: "X", menu: true }, { name: "Include X", menu: false },
];

const TOOLS = [
  { name: "Sort order", icon: svg`<path d="M7 11v5M7 21v4" stroke="#666" stroke-width="2"/><path d="M7 9l3.500 4h-7zM7 27l3.500-4h-7z" fill="#666"/><path d="M12 11h9M12 15.500h9M12 20h9M12 24.500h9" stroke="#666" stroke-width="2"/>` },
  { name: "Channel", icon: svg`<text x="11.500" y="23" text-anchor="middle" font-family="Liberation Serif, serif" font-size="14" fill="#555" stroke="#666" stroke-width=".4">CH</text>` },
  { name: "Measure interval", icon: svg`<path d="M3.500 13.500v-4h14v4M10.500 9.500v11M7.500 20.500h6" fill="none" stroke="#666" stroke-width="2"/><path d="M3 22v4M18 22v4M4 24h13" stroke="#666"/><path d="M3.500 24l3-2v4zM17.500 24l-3-2v4z" fill="#666"/>` },
  { name: "Select all", icon: svg`<path d="M2.500 20V8.500H13M4.500 22V10.500H15" fill="none" stroke="#666"/><rect x="7" y="13" width="11" height="11" fill="#fff" stroke="#666"/><path d="M9.500 18l2.500 3 4-6" fill="none" stroke="#666" stroke-width="2"/>` },
  { name: "Grid view", icon: svg`<path d="M2 9h7v7H2zM11 9h7v7h-7zM2 18h7v7H2zM11 18h7v7h-7z" fill="#707070"/>` },
  { name: "Pick from grid", icon: svg`<path d="M10 9h7v7h-7zM1 18h7v7H1zM10 18h7v7h-7z" fill="#707070"/><path d="M1.500 9.500h6v6h-6z" fill="#fff" stroke="#707070"/>` },
];

const STATUS = ["Visible Channel", "Measuring Ruler", "Parallel Ruler", "Gain Settings"];

@customElement("app-root")
export class AppRoot extends LitElement {
  static styles = css`
    :host {
      display: flex;
      flex-direction: column;
      min-height: 100vh;
      background: #fdfeff;
      font: 12px/16px Roboto, "Noto Sans", sans-serif;
      color: #1e395b;
    }
    button { font: inherit; color: inherit; }
    header {
      display: flex;
      flex-direction: column;
      height: 54px;
      box-sizing: border-box;
      border-bottom: 2px solid #7c98ba;
      background: linear-gradient(#c4d5ed, #bad0e7 50%, #b9cee6);
    }
    .titlebar { display: grid; grid-template-columns: 1fr auto 1fr; align-items: center; height: 25px; padding: 0 6px 0 1px; }
    .brand { display: flex; align-items: center; gap: 7px; padding-bottom: 2px; }
    .brand svg { display: block; }
    .brand i { width: 1px; height: 14px; background: #8095b0; box-shadow: 1px 0 #e6eef8; }
    .title { color: #24446e; padding-right: 140px; }
    .window { display: flex; justify-content: flex-end; gap: 8px; padding-bottom: 4px; }
    .window button { display: block; padding: 0; border: 0; background: none; }
    .window svg { display: block; }
    .tabs { display: flex; align-items: center; gap: 28px; padding: 2px 16px 0; height: 27px; box-sizing: border-box; }
    .tab { display: flex; align-items: center; gap: 16px; }
    .tab a { color: inherit; text-decoration: none; }
    .close { display: block; padding: 0; border: 0; background: none; }
    .close svg { display: block; }
    .overview { display: flex; align-items: flex-start; padding-right: 14px; }
    .overview trend-plot { flex: 1; min-width: 0; }
    .return {
      width: 64px; height: 81px; margin-top: 8px; padding: 0; border: 0;
      background: #dfebf7; color: #000;
      font: 13px/16px "Liberation Serif", "Times New Roman", serif;
    }
    .workspace { display: grid; grid-template-columns: 543fr 39px 1284fr; padding: 4px 14px 0 40px; }
    .filters {
      display: grid;
      grid-template-columns: repeat(6, 1fr);
      gap: 5px 2px;
      margin-top: 6px;
      padding: 0 4px 15px 0;
      background: #edf5fd;
    }
    .filter {
      display: flex; align-items: center; justify-content: center;
      height: 35px; padding: 0; border: 0;
      background: #dfebf7; color: #000;
      font: 13px/16px "Liberation Serif", "Times New Roman", serif;
    }
    .filter.on { background: #c2d9f3; }
    .caption { position: relative; }
    .filter.menu .caption::after {
      content: "";
      position: absolute;
      left: calc(100% + 2px);
      top: 6px;
      border: 5px solid transparent;
      border-top-color: #86a1c6;
      border-bottom: 0;
    }
    .tools { display: flex; flex-direction: column; justify-content: flex-end; align-items: center; gap: 12px; padding-bottom: 37px; }
    .tool {
      display: flex; align-items: flex-start; width: 21px; height: 36px; padding: 0; border: 0;
      background: linear-gradient(#fff 27px, #e4e4e4 27px, #e4e4e4 31px, #d4d4d4 31px, #d4d4d4 35px, #c0c0c0 35px);
    }
    .review { display: grid; grid-auto-rows: minmax(320px, auto); gap: 10px; min-width: 0; }
    .templates {
      display: grid;
      box-sizing: border-box;
      grid-template-columns: 2fr 1fr 1fr;
      grid-template-rows: 1fr 1fr;
      gap: 2px;
      padding: 2px 1px 1px 2px;
      border: 1px solid #606060;
      background: #000;
    }
    .templates template-cell:first-child { grid-row: 1 / 3; }
    .beats { display: grid; grid-template-columns: 1fr 17px; box-sizing: border-box; border: 1px solid #606060; background: #edf5fd; }
    .cards {
      display: grid;
      grid-template-columns: repeat(4, 1fr);
      grid-auto-rows: 90px;
      gap: 12px 52px;
      padding: 12px 52px 0 53px;
    }
    .scroll { display: flex; flex-direction: column; background: linear-gradient(90deg, #9db4d2 3px, #b0c6e2 4px, #b4c9e3 11px, #a6bfde 12px); }
    .scroll button { display: block; padding: 0; border: 0; background: none; height: 17px; }
    .scroll svg { display: block; margin: auto; }
    .thumb {
      display: flex; flex-direction: column; justify-content: center; align-items: center; gap: 1px;
      height: 61px; box-sizing: border-box; margin: 0 1px; border: 1px solid #7587a3; border-radius: 1px;
      background: linear-gradient(90deg, #b6cce6 3px, #c4d7ee 8px, #9fbbdc);
    }
    .thumb i { width: 8px; height: 1px; background: #7b8ca6; }
    .track { flex: 1; }
    .strip { padding: 0 23px 0 46px; }
    footer {
      display: flex;
      justify-content: space-between;
      height: 29px;
      box-sizing: border-box;
      margin-top: auto;
      border-top: 1px solid #8aa3c4;
      border-bottom: 2px solid #dfe7f4;
      background: linear-gradient(#fff 1px, #d5e2f2 2px, #c4d3e7 10px, #b3c5db);
      color: #1f3a64;
    }
    .ready { align-self: center; padding: 2px 0 0 3px; color: #2b5aa0; }
    .status { display: flex; align-items: stretch; padding-right: 1px; }
    .status button { width: 122px; padding: 2px 0 0; border: 0; border-left: 1px solid #93a8c3; box-shadow: inset 1px 0 #dbe6f3; background: none; }
    .status .length { width: 120px; }
    .status .grip { width: 35px; border-left: 1px solid #93a8c3; border-right: 1px solid #93a8c3; box-sizing: border-box; box-shadow: inset 1px 0 #dbe6f3; }
  `;

  render() {
    return html`
      <header>
        <div class="titlebar">
          <div class="brand">
            <svg width="16" height="16" viewBox="0 0 16 16" aria-hidden="true">
              <rect width="16" height="16" rx="2" fill="#8fdcfb"></rect>
              <path d="M8 14L2.500 8.500C.8 6 2 3 4.500 3 6.200 3 7.300 4 8 5c.7-1 1.800-2 3.500-2C14 3 15.200 6 13.500 8.500z" fill="#5fb0ee"></path>
              <path d="M3 7h2.500l1.500 3 2-6 1.500 4H13" fill="none" stroke="#a6dcf8"></path>
            </svg>
            <i></i>
          </div>
          <span class="title">View Record</span>
          <div class="window">
            <button type="button" aria-label="Minimize"><svg width="12" height="12"><rect x="1" y="7" width="10" height="3" fill="#fff" stroke="#555d69"></rect></svg></button>
            <button type="button" aria-label="Restore"><svg width="13" height="12"><path d="M4.500.5h7v6h-7z" fill="#fff" stroke="#555d69"></path><path d="M7 3.500h3" stroke="#555d69"></path><path d="M1 4.500h6.500V11H1z" fill="#fff" stroke="#555d69"></path><path d="M3 7.500h3v1H3z" fill="none" stroke="#555d69"></path></svg></button>
            <button type="button" aria-label="Close"><svg width="12" height="12"><path d="M1.500 1.500h2.500l2 2.500 2-2.500h2.500L8 5.500l3 4H8.500L6 7 3.500 9.500H1l3-4z" fill="#fff" stroke="#555d69"></path></svg></button>
          </div>
        </div>
        <nav class="tabs">
          <span class="tab"><a href="#manage">Manage Record</a></span>
          <span class="tab"><a href="#view">View Record</a>
            <button class="close" type="button" aria-label="Close tab"><svg width="9" height="9"><path d="M1 1l7 7M8 1L1 8" stroke="#000" stroke-width="2"></path></svg></button>
          </span>
        </nav>
      </header>
      <section class="overview">
        <trend-plot></trend-plot>
        <button class="return" type="button">Return</button>
      </section>
      <main class="workspace">
        <section>
          <lorenz-plot></lorenz-plot>
          <div class="filters">
            ${FILTERS.map((x, i) => html`<button type="button" class=${classMap({ filter: true, on: i === 0, menu: x.menu })}><span class="caption">${x.name}</span></button>`)}
          </div>
        </section>
        <div class="tools">
          ${TOOLS.map((t) => html`<button class="tool" type="button" aria-label=${t.name}><svg width="21" height="28" viewBox="1 0 21 28">${t.icon}</svg></button>`)}
        </div>
        <section class="review">
          <div class="templates">
            <template-cell .index=${1} .count=${53} lead="II" active></template-cell>
            <template-cell .index=${2} .count=${5}></template-cell>
            <template-cell .index=${3} .count=${5}></template-cell>
            <template-cell .index=${4}></template-cell>
            <template-cell .index=${5}></template-cell>
          </div>
          <div class="beats">
            <div class="cards">
              ${BEATS.map((b, i) => html`<beat-card .beat=${b} ?selected=${i === 0}></beat-card>`)}
            </div>
            <div class="scroll">
              <button type="button" aria-label="Scroll up"><svg width="9" height="5"><path d="M0 5L4.500 0 9 5z" fill="#444"></path></svg></button>
              <div class="thumb"><i></i><i></i><i></i><i></i></div>
              <div class="track"></div>
              <button type="button" aria-label="Scroll down"><svg width="9" height="5"><path d="M0 0l4.500 5L9 0z" fill="#444"></path></svg></button>
            </div>
          </div>
        </section>
      </main>
      <section class="strip"><ecg-strip></ecg-strip></section>
      <footer>
        <span class="ready">Ready</span>
        <div class="status">
          ${STATUS.map((s) => html`<button type="button">${s}</button>`)}
          <button class="length" type="button">Strip Length:14.8s</button>
          <span class="grip"></span>
        </div>
      </footer>`;
  }
}
